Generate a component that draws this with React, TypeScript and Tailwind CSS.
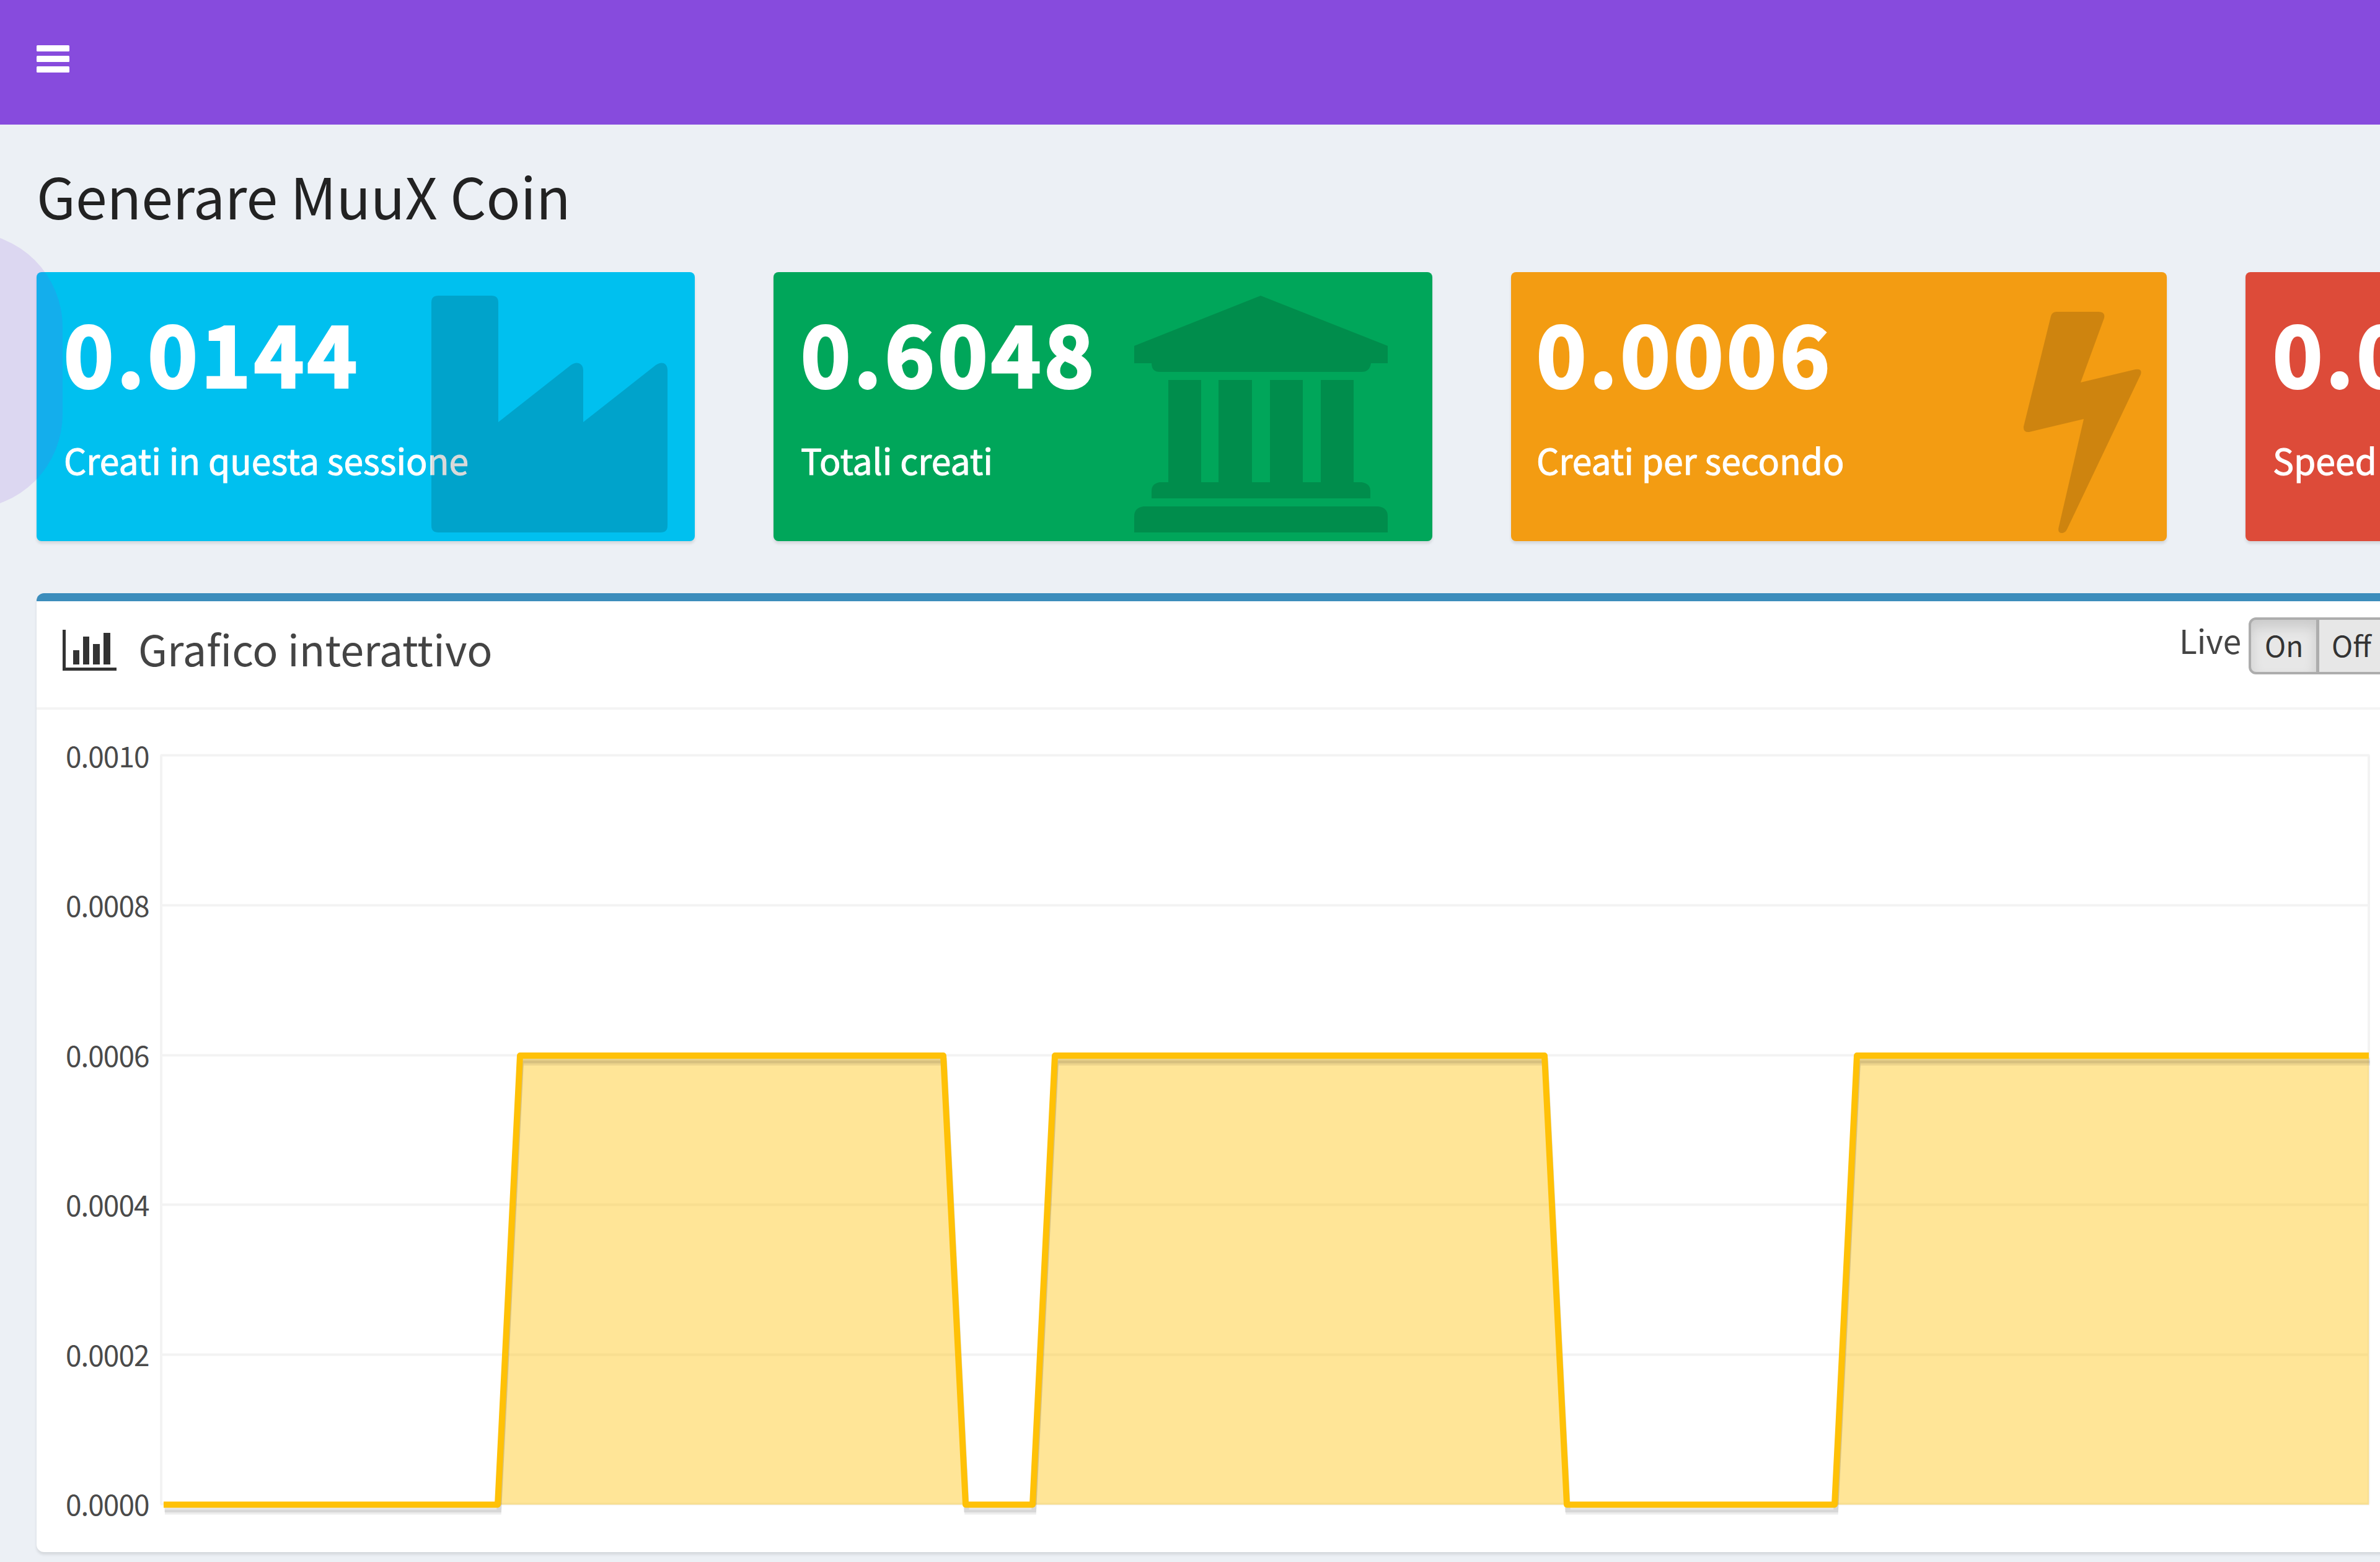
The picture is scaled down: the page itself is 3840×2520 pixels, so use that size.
import React from "react";

const FONT = "font-['Noto_Sans_CJK_SC','Open_Sans',sans-serif]";

function Burger() {
  return (
    <svg className="block h-[44px] w-[53px]" viewBox="0 0 53 44" fill="#fff">
      <rect width="53" height="10" rx="1.5" />
      <rect y="17" width="53" height="10" rx="1.5" />
      <rect y="34" width="53" height="10" rx="1.5" />
    </svg>
  );
}

function IndustryIcon() {
  return (
    <path d="M648 38H734Q745 38 745 49V242L862 150Q869 145 875 147Q882 150 882 158V242L999 150Q1006 145 1012 147Q1018 150 1018 158V409Q1018 420 1007 420H648Q637 420 637 409V49Q637 38 648 38Z" />
  );
}

function BankIcon() {
  return (
    <path d="M786 38L991 119V147H964Q962 161 949 161H623Q610 161 610 147H582V119ZM637 174H690V339H718V174H772V339H801V174H854V339H883V174H936V339H949Q963 341 963 353V365H610V353Q610 341 623 339H637ZM597 378H976Q991 380 991 394V420H582V394Q582 380 597 378Z" />
  );
}

function BoltIcon() {
  return (
    <path d="M880 64H948Q959 64 957 74L919 178L1007 157Q1019 155 1016 165L897 415Q894 421 888 421Q881 420 884 410L924 237L836 258Q826 259 827 249L871 71Q873 64 880 64Z" />
  );
}

type CardProps = {
  value: string;
  label: string;
  tone: string;
  width: string;
  inset?: string;
  icon?: React.ReactNode;
};

function StatCard({ value, label, tone, width, inset = "pl-[44px]", icon }: CardProps) {
  return (
    <section className={`relative h-[434px] shrink-0 overflow-hidden rounded-[8px] shadow-[0_4px_4px_rgba(0,0,0,0.1)] ${tone} ${width}`}>
      <div className={`pt-[57px] text-white ${inset}`}>
        <div className="whitespace-nowrap text-[136px] font-bold leading-[140px] tracking-[5.5px] [-webkit-text-stroke:4px_white]">{value}</div>
        <div className="mt-[70px] whitespace-nowrap text-[57px] leading-[70px] [-webkit-text-stroke:1px_white]">{label}</div>
      </div>
      <svg className="absolute inset-0 h-[434px] w-[1062px]" viewBox="0 0 1062 434" fill="rgba(0,0,0,0.15)">
        {icon}
      </svg>
    </section>
  );
}

const LEVELS = ["0.0010", "0.0008", "0.0006", "0.0004", "0.0002", "0.0000"];
const LINE = "M3 1208.5H542L578 484H1261L1297 1208.5H1405L1441 484H2231L2267 1208.5H2699L2735 484H3561";

function Chart() {
  return (
    <div className="flex pt-[52px]">
      <div className="-mt-[4px] ml-[47px] flex w-[155px] flex-col text-[46px] tracking-[-1px] text-[#4a4a4a]">
        {LEVELS.map((l) => (
          <div key={l} className="h-[241.4px] whitespace-nowrap leading-[50px]">{l}</div>
        ))}
      </div>
      <svg className="block h-[1240px] w-[3580px] overflow-visible" viewBox="0 -22 3580 1240">
        <g transform="translate(0,-0.5)">
          {[0, 242, 484, 725, 967, 1208].map((y) => (
            <path key={y} d={`M-2 ${y}H3562`} stroke="#f3f3f3" strokeWidth="4" />
          ))}
          <path d="M-1 0V1208M3561 0V1208" stroke="#f3f3f3" strokeWidth="4" />
        </g>
        <path d={`${LINE}V1208.5H3Z`} fill="#ffc107" fillOpacity="0.42" />
        <path d={LINE} transform="translate(2,12)" fill="none" stroke="#000" strokeOpacity="0.07" strokeWidth="8" />
        <path d={LINE} transform="translate(1.5,8)" fill="none" stroke="#000" strokeOpacity="0.09" strokeWidth="9" />
        <path d={LINE} fill="none" stroke="#ffc107" strokeWidth="10" strokeLinejoin="round" />
      </svg>
    </div>
  );
}

export default function App() {
  return (
    <div className={`relative h-[2520px] w-[3840px] overflow-hidden bg-[#ecf0f5] ${FONT}`}>
      <header className="h-[201px] bg-[#874bdd] pl-[59px] pt-[73px]">
        <Burger />
      </header>
      <h1 className="ml-[59px] mt-[63px] h-[105px] whitespace-nowrap text-[91.3px] leading-[100px] text-[#222]">Generare MuuX Coin</h1>
      <div className="ml-[59px] mt-[70px] flex w-[4400px] gap-[127px]">
        <StatCard value="0.0144" label="Creati in questa sessione" tone="bg-[#00c0ef]" width="w-[1062px]" icon={<IndustryIcon />} />
        <StatCard value="0.6048" label="Totali creati" tone="bg-[#00a65a]" width="w-[1063px]" icon={<BankIcon />} />
        <StatCard value="0.0006" label="Creati per secondo" tone="bg-[#f39c12]" width="w-[1058px]" inset="pl-[41px]" icon={<BoltIcon />} />
        <StatCard value="0.0006" label="Speed" tone="bg-[#dd4b39]" width="w-[1062px]" />
      </div>
      <div className="absolute left-[-340px] top-[375px] h-[446px] w-[441px] rounded-[153px] bg-[#874bdd]/15" />
      <main className="ml-[59px] mt-[84px] h-[1547px] w-[3900px] rounded-[12px] border-t-[13px] border-[#3c8dbc] bg-white shadow-[0_4px_4px_rgba(0,0,0,0.1)]">
        <div className="flex h-[175px] border-b-4 border-[#f4f4f4] text-[#444]">
          <svg className="ml-[42px] mt-[46px] block h-[66px] w-[88px]" viewBox="0 0 88 66" fill="#333">
            <path d="M0 0H5V61H87V66H0ZM17 33H27V56H17ZM33 11H43V56H33ZM49 23H60V56H49ZM66 5H77V56H66Z" />
          </svg>
          <h3 className="ml-[34px] mt-[36px] w-[620px] whitespace-nowrap text-[68.3px] leading-[80px]">Grafico interattivo</h3>
          <div className="ml-[2673px] mt-[26px] flex">
            <span className="mt-[1px] w-[112px] whitespace-nowrap text-[53px] leading-[70px]">Live</span>
            <div className="flex h-[92px] w-[240px] overflow-hidden rounded-[12px] border-4 border-[#adadad] bg-[#e7e7e7] text-[46px] leading-[80px] text-[#333]">
              <span className="w-[110px] border-r-[5px] border-[#adadad] pl-[22px] shadow-[inset_0_12px_20px_rgba(0,0,0,0.125)]">On</span>
              <span className="pl-[20px]">Off</span>
            </div>
          </div>
        </div>
        <Chart />
      </main>
    </div>
  );
}
